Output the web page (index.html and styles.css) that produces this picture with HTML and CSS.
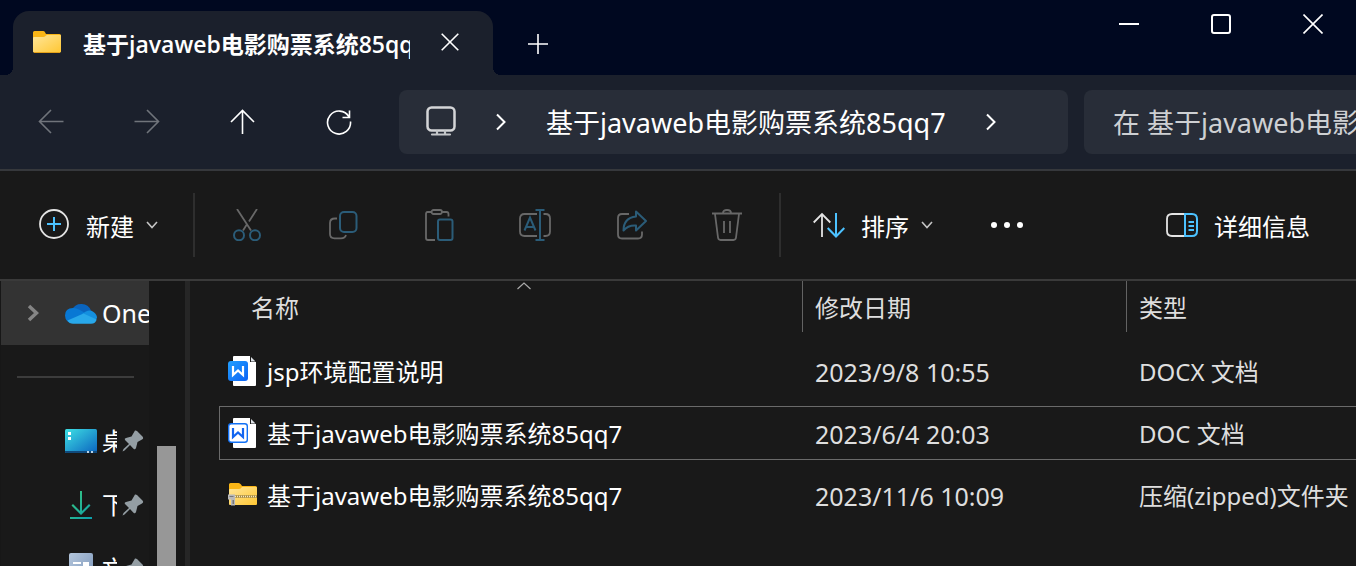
FILE: index.html
```html
<!DOCTYPE html>
<html lang="zh-CN">
<head>
<meta charset="utf-8">
<title>基于javaweb电影购票系统85qq7</title>
<link rel="stylesheet" href="styles.css">
</head>
<body>
<svg class="defs" aria-hidden="true">
  <defs>
    <linearGradient id="folder" x1="0" y1="0" x2="1" y2="1"><stop offset="0" stop-color="#ffe69a"/><stop offset="1" stop-color="#ffc733"/></linearGradient>
    <linearGradient id="desk" x1="0" y1="0" x2="1" y2="1"><stop offset="0" stop-color="#3ee0e4"/><stop offset="1" stop-color="#0b63bf"/></linearGradient>
    <linearGradient id="down" x1="0" y1="0" x2="1" y2="1"><stop offset="0" stop-color="#3cc97b"/><stop offset="1" stop-color="#0b9fae"/></linearGradient>
    <linearGradient id="doc" x1="0" y1="0" x2="1" y2="1"><stop offset="0" stop-color="#b4c6dc"/><stop offset="1" stop-color="#7893b8"/></linearGradient>
    <linearGradient id="word" x1="0" y1="0" x2="1" y2="1"><stop offset="0" stop-color="#22a0ff"/><stop offset="1" stop-color="#0b62f5"/></linearGradient>
    <symbol id="pin" viewBox="0 0 22 22"><path fill="#949ea4" d="M13 0.5Q14 .2 15 1L20.500 6.500Q22 8.500 20 9.500L15.500 12 14 18Q13 20 11.500 18.700L8 15 2.500 20.500.5 21.500 1.500 19 7 14 3 10Q2 8.500 4 8L9.500 6.500Z"/></symbol>
  </defs>
</svg>

<header class="titlebar">
  <div class="tab">
    <svg class="tab-icon" width="28" height="22" viewBox="0 0 28 22"><path fill="#fbb616" d="M0 1.500Q0 0 1.500 0H10q1.500 0 2 1.200L13 3H26.500Q28 3 28 4.500V20H0Z"/><path fill="url(#folder)" d="M0 7q0-1 1-1h9.500q1 0 1.800-.8T14 4H27q1 0 1 1V20.500Q28 21.500 27 21.500H1Q0 21.500 0 20.500Z"/><path stroke="#e5a21a" d="M1 21.500H27"/></svg>
    <span class="tab-title">基于javaweb电影购票系统85qq7</span>
    <button class="bare" aria-label="关闭标签页"><svg width="18" height="18" viewBox="0 0 18 18"><path class="line" d="M.7.7 17.300 17.300M17.300.7.7 17.300"/></svg></button>
  </div>
  <button class="bare new-tab" aria-label="新建标签页"><svg width="20" height="20" viewBox="0 0 20 20"><path class="line" d="M0 10H20M10 0V20"/></svg></button>
  <div class="window-controls">
    <button class="bare" aria-label="最小化"><svg width="20" height="20" viewBox="0 0 20 20"><path class="line strong" d="M0 10H20"/></svg></button>
    <button class="bare" aria-label="最大化"><svg width="20" height="20" viewBox="0 0 20 20"><rect class="line strong" x="1" y="1" width="18" height="18" rx="2"/></svg></button>
    <button class="bare" aria-label="关闭"><svg width="20" height="20" viewBox="0 0 20 20"><path class="line" d="M.5.5 19.500 19.500M19.500.5.5 19.500"/></svg></button>
  </div>
</header>

<nav class="navbar" aria-label="导航">
  <div class="nav-buttons">
    <button class="bare dim" aria-label="后退"><svg width="26" height="26" viewBox="0 0 26 26"><path class="line" d="M25.500 12.500H1.500M13 1 1.500 12.500 13 24"/></svg></button>
    <button class="bare dim" aria-label="前进"><svg width="26" height="26" viewBox="0 0 26 26"><path class="line" d="M.5 12.500H24.500M13 1 24.500 12.500 13 24"/></svg></button>
    <button class="bare" aria-label="向上"><svg width="26" height="26" viewBox="0 0 26 26"><path class="line" d="M12.500 25V1.500M1 13 12.500 1.500 24 13"/></svg></button>
    <button class="bare" aria-label="刷新"><svg width="26" height="26" viewBox="0 0 26 26"><path class="line" d="M24.500 12.500A11.500 11.500 0 1 1 23 7.800M23.500 1.500V8.500H16.500"/></svg></button>
  </div>
  <div class="address">
    <svg width="30" height="32" viewBox="0 0 30 32"><rect x="1.500" y="1.500" width="27" height="23" rx="4" fill="none" stroke="#d4d5d7" stroke-width="2.500"/><path d="M11 25v3M19 25v3M6 28.500H24" stroke="#c4c6c9" stroke-width="2.200" stroke-linecap="round"/></svg>
    <svg class="crumb-arrow" width="10" height="18" viewBox="0 0 10 18"><path class="line strong" d="M1 1.500 8.500 9 1 16.500"/></svg>
    <span class="crumb">基于javaweb电影购票系统85qq7</span>
    <svg class="crumb-arrow" width="10" height="18" viewBox="0 0 10 18"><path class="line strong" d="M1 1.500 8.500 9 1 16.500"/></svg>
  </div>
  <input class="search" type="text" aria-label="搜索" placeholder="在 基于javaweb电影">
</nav>

<div class="commands" role="toolbar" aria-label="命令">
  <button class="bare labeled"><svg width="32" height="32" viewBox="0 0 32 32"><circle cx="16" cy="15" r="14" class="line light"/><path class="line bright" d="M16 8V22M9 15H23"/></svg><span>新建</span><svg width="12" height="8" viewBox="0 0 12 8"><path class="line soft" d="M1 1 6 6.500 11 1"/></svg></button>
  <div class="command-group">
    <button class="bare" aria-label="剪切"><svg width="32" height="32" viewBox="0 0 32 32"><path class="line gray" d="M6 0 20 21.500M26 0 18 12.500M15.500 16 12 21.500"/><circle class="line blue" cx="8" cy="26.300" r="5"/><circle class="line blue" cx="24" cy="26.300" r="5"/></svg></button>
    <button class="bare" aria-label="复制"><svg width="32" height="32" viewBox="0 0 32 32"><rect class="line blue" x="13" y="3" width="16.500" height="20" rx="4"/><path class="line gray" d="M10 9.500H8Q3 9.500 3 14V25Q3 29.300 7.500 29.300H14Q18 29.300 19 26"/></svg></button>
    <button class="bare" aria-label="粘贴"><svg width="32" height="32" viewBox="0 0 32 32"><path class="line gray" d="M8.500 3H4.500Q3 3 3 5V29Q3 31 5 31H12M19 3H23.500Q25.500 3 25.500 5V7.500"/><rect class="line gray" x="8.500" y="1" width="10.500" height="4" rx="2"/><rect class="line blue" x="15" y="10.500" width="14.500" height="20.500" rx="2"/></svg></button>
    <button class="bare" aria-label="重命名"><svg width="32" height="32" viewBox="0 0 32 32"><path class="line gray" d="M18 5H5.500Q1 5 1 9.500V22.500Q1 27 5.500 27H18M24.500 5H26.500Q31 5 31 9.500V22.500Q31 27 26.500 27H24.500"/><path class="line blue" d="M21 1V31M16.500 1H25.500M16.500 31H25.500M5.500 21.500 11 8.500 16.500 21.500M7 18H15"/></svg></button>
    <button class="bare" aria-label="共享"><svg width="32" height="32" viewBox="0 0 32 32"><path class="line gray" d="M14 5H7Q3 5 3 9V25.500Q3 29.500 7 29.500H23Q27 29.500 27 25.500V22.500"/><path class="line blue" stroke-linejoin="round" d="M21 2.500 31 12 21 21.500V16.500Q13 16 8.500 21.500Q8.500 9 21 7.500Z"/></svg></button>
    <button class="bare" aria-label="删除"><svg width="32" height="32" viewBox="0 0 32 32"><path class="line gray" d="M1 4.500H31M12 4Q12 1 16 1T20 4M4 5 7 28.500Q7.300 31 9.500 31H22.500Q24.700 31 25 28.500L28 5M13 12V24M19 12V24"/></svg></button>
  </div>
  <button class="bare labeled"><svg width="32" height="32" viewBox="0 0 32 32"><path class="line light" d="M9 28V5M.7 13.500 9 5 17.300 13.500"/><path class="line bright" d="M23 4V27.500M14.700 19 23 27.500 31.300 19"/></svg><span>排序</span><svg width="12" height="8" viewBox="0 0 12 8"><path class="line soft" d="M1 1 6 6.500 11 1"/></svg></button>
  <button class="bare more" aria-label="查看更多"><svg width="32" height="6" viewBox="0 0 32 6"><g fill="#fff"><circle cx="3" cy="3" r="3"/><circle cx="16" cy="3" r="3"/><circle cx="29" cy="3" r="3"/></g></svg></button>
  <button class="bare labeled details"><svg width="32" height="32" viewBox="0 0 32 32"><path class="line light" d="M19 5H6Q1 5 1 10V22Q1 27 6 27H19"/><path class="line bright" d="M19 5H26Q31 5 31 10V22Q31 27 26 27H19ZM22.500 13H28M22.500 17H28M22.500 21H28"/></svg><span>详细信息</span></button>
</div>

<main class="content">
  <aside class="sidebar">
    <div class="tree">
      <a class="place current" href="#onedrive">
        <svg class="expander" width="12" height="18" viewBox="0 0 12 18"><path d="M2 2 9.500 9 2 16" fill="none" stroke="#858585" stroke-width="3.500"/></svg>
        <svg width="32" height="21" viewBox="0 0 32 21"><path fill="#0a64bd" d="M7 6.500A10.500 10.500 0 0 1 26 7.500L18 13Z"/><path fill="#0878d4" d="M8 20.500A8 8 0 0 1 0 12.500Q0 5 8 5Q11 4.800 14 6.500L22 11 4 20Z"/><path fill="#1490df" d="M17 11 21 8.500Q25 6.500 28.500 9Q32 11.500 32 15L29 19Z"/><path fill="#28a8ea" d="M2.500 17.500 18.500 10.500 31.700 16.500Q30.500 20.700 26 20.700H8Q4.500 20.700 2.500 17.500Z"/></svg>
        <span class="place-name">One</span>
      </a>
      <hr class="divider">
      <a class="place" href="#desktop">
        <svg width="32" height="24" viewBox="0 0 32 24"><rect width="32" height="24" rx="1.500" fill="url(#desk)"/><path fill="#104a7c" d="M0 22H32V23Q32 24 31 24H1Q0 24 0 23Z"/><path fill="#fff" d="M3 3H6V6H3ZM3 8H6V11H3Z"/><path fill="#b9d3e8" d="M22 22h2v2h-2ZM26 22h2v2h-2Z"/></svg>
        <span class="place-name">桌面</span><svg class="pin" width="22" height="22"><use href="#pin"/></svg>
      </a>
      <a class="place" href="#downloads">
        <svg width="32" height="28" viewBox="0 0 32 28"><path fill="url(#down)" d="M15 0H17V20L24 13 25.500 14.500 16 24 6.500 14.500 8 13 15 20ZM5 26H27V28H5Z"/></svg>
        <span class="place-name">下载</span><svg class="pin" width="22" height="22"><use href="#pin"/></svg>
      </a>
      <a class="place" href="#documents">
        <svg width="32" height="32" viewBox="0 0 32 32"><rect x="4" width="24" height="32" rx="2" fill="url(#doc)"/><path fill="#fff" d="M8 9H16V11H8ZM18 9H24V15H18ZM8 13H16V15H8Z"/></svg>
        <span class="place-name">文档</span><svg class="pin" width="22" height="22"><use href="#pin"/></svg>
      </a>
    </div>
    <div class="scrollbar"><div class="thumb"></div></div>
  </aside>

  <section class="files">
    <table>
      <colgroup><col><col class="col-date"><col class="col-type"></colgroup>
      <thead>
        <tr>
          <th scope="col"><div class="head first">名称<svg class="sort-mark" width="14" height="8" viewBox="0 0 14 8"><path d="M.5 7 7 1 13.500 7" fill="none" stroke="#aaa" stroke-width="1.200"/></svg></div></th>
          <th scope="col"><div class="head">修改日期</div></th>
          <th scope="col"><div class="head">类型</div></th>
        </tr>
      </thead>
      <tbody>
        <tr>
          <td><div class="cell name"><svg width="29" height="32" viewBox="0 0 29 32"><path fill="#fff" d="M6 1H22L28 7V30Q28 31 27 31H6Q5 31 5 30V2Q5 1 6 1Z"/><path fill="#191919" d="M22 1H28V7H22Z"/><path fill="#dfe3e8" d="M23 2 27.500 6.500H23Z"/><rect y="6" width="20" height="20" rx="3" fill="url(#word)"/><path fill="none" stroke="#fff" stroke-width="2.200" d="M5 11V20L10 15.500 15 20V11"/></svg><span>jsp环境配置说明</span></div></td>
          <td><div class="cell date">2023/9/8 10:55</div></td>
          <td><div class="cell">DOCX 文档</div></td>
        </tr>
        <tr class="focused">
          <td><div class="cell name"><svg width="29" height="32" viewBox="0 0 29 32"><path fill="#fff" d="M6 1H22L28 7V30Q28 31 27 31H6Q5 31 5 30V2Q5 1 6 1Z"/><path fill="#191919" d="M22 1H28V7H22Z"/><path fill="#dfe3e8" d="M23 2 27.500 6.500H23Z"/><rect x=".7" y="6.700" width="18.600" height="18.600" rx="2.500" fill="#fff" stroke="#1271f5" stroke-width="1.400"/><path fill="none" stroke="#1265f0" stroke-width="2.200" d="M5 11V20L10 15.500 15 20V11"/></svg><span>基于javaweb电影购票系统85qq7</span></div></td>
          <td><div class="cell date">2023/6/4 20:03</div></td>
          <td><div class="cell">DOC 文档</div></td>
        </tr>
        <tr>
          <td><div class="cell name"><svg width="29" height="24" viewBox="0 0 29 24"><path fill="#fbb616" d="M1 1.500Q1 0 2.500 0H10.500Q12 0 13 1.500L14 3H27.500Q29 3 29 4.500V20H1Z"/><path fill="url(#folder)" d="M1 7Q1 6 2 6H11Q13 6 14 4H28Q29 4 29 5V21Q29 22 28 22H2Q1 22 1 21Z"/><path stroke="#a58a44" stroke-width="2.600" d="M6 13.500H29"/><path stroke="#f3e7c0" stroke-width="1.500" stroke-dasharray="1 1" d="M7 13.500H29"/><path fill="#b9b9b9" d="M0 11.500H7V22.500H3V16.500H0Z"/><path fill="#777" d="M4.500 17H6V21H4.500ZM1.500 13H5.500V14H1.500Z"/></svg><span>基于javaweb电影购票系统85qq7</span></div></td>
          <td><div class="cell date">2023/11/6 10:09</div></td>
          <td><div class="cell">压缩(zipped)文件夹</div></td>
        </tr>
      </tbody>
    </table>
  </section>
</main>
</body>
</html>
```
FILE: styles.css
```css
* { box-sizing: border-box; }

body {
  margin: 0;
  height: 100vh;
  display: flex;
  flex-direction: column;
  overflow: hidden;
  background: #191919;
  color: #fff;
  font: 24px/32px "Noto Sans", "Noto Sans CJK SC", sans-serif;
}

svg { display: block; flex: none; }
.defs { position: absolute; width: 0; height: 0; }

.bare {
  display: flex;
  align-items: center;
  justify-content: center;
  padding: 0;
  border: 0;
  background: none;
  color: inherit;
  font: inherit;
}

.line { fill: none; stroke: #fff; stroke-width: 1.6; }
.strong { stroke-width: 2; }
.light { stroke: #e4e4e4; stroke-width: 1.8; }
.soft { stroke: #c4c4c4; }
.bright { stroke: #4cc2ff; stroke-width: 2; }
.gray { stroke: #686868; stroke-width: 1.8; }
.blue { stroke: #2b5c78; stroke-width: 2; }
.dim .line { stroke: #70747b; }

/* Title bar */
.titlebar {
  flex: none;
  display: flex;
  align-items: flex-end;
  height: 75px;
  padding-left: 13px;
  background: #000820;
}

.tab {
  position: relative;
  display: flex;
  align-items: center;
  width: 480px;
  height: 64px;
  padding: 0 34px 2px 20px;
  border-radius: 16px 16px 0 0;
  background: #1b202c;
}

.tab::before,
.tab::after {
  content: "";
  position: absolute;
  bottom: 0;
  width: 8px;
  height: 8px;
}
.tab::before { right: 100%; background: radial-gradient(circle at 0 0, transparent 8px, #1b202c 8px); }
.tab::after { left: 100%; background: radial-gradient(circle at 100% 0, transparent 8px, #1b202c 8px); }

.tab-icon { margin-right: 22px; }
.tab-title {
  flex: 1;
  margin-right: 31px;
  padding-top: 4px;
  overflow: hidden;
  white-space: nowrap;
  font-family: "Open Sans", "Noto Sans CJK SC", sans-serif;
  font-size: 23px;
  font-weight: 600;
}

.new-tab { height: 62px; margin-left: 35px; }

.window-controls {
  align-self: flex-start;
  display: flex;
  gap: 72px;
  height: 48px;
  margin-left: auto;
  padding-right: 33px;
}

/* Navigation bar */
.navbar {
  flex: none;
  display: flex;
  gap: 16px;
  padding: 15px 0;
  border-bottom: 2px solid #36383c;
  background: #1b202c;
  font-size: 27px;
}

.nav-buttons { flex: none; display: flex; padding-left: 3px; margin-right: -4px; }
.nav-buttons .bare { width: 96px; }

.address,
.search { height: 64px; background: #282d38; }

.address {
  flex: 1;
  display: flex;
  align-items: center;
  padding-left: 27px;
  border-radius: 8px;
  white-space: nowrap;
}
.crumb-arrow { margin: 0 40px; }
.crumb { padding-top: 2px; }

.search {
  flex: none;
  width: 272px;
  padding: 0 0 0 29px;
  border: 0;
  border-radius: 8px 0 0 8px;
  color: #fff;
  font: inherit;
}
.search::placeholder { color: #ced0d3; opacity: 1; }

/* Command bar */
.commands {
  flex: none;
  display: flex;
  align-items: center;
  height: 110px;
  padding: 0 46px 0 38px;
  border-bottom: 2px solid #3a3a3a;
}

.labeled { gap: 16px; white-space: nowrap; }
.labeled span { padding-top: 3px; }
.labeled svg + span + svg { margin-left: -4px; }

.command-group {
  display: flex;
  height: 64px;
  margin: 0 32px 0 35px;
  padding: 0 4px;
  border-left: 2px solid #2e2e2e;
  border-right: 2px solid #2e2e2e;
}
.command-group .bare { width: 96px; }

.more { margin-left: 58px; }
.details { margin-left: auto; }

/* Sidebar */
.content { flex: 1; display: flex; min-height: 0; }

.sidebar {
  flex: none;
  display: flex;
  width: 190px;
  padding-left: 1px;
  border-right: 5px solid #262626;
  background: #171717;
}

.tree { width: 148px; overflow: hidden; background: #191919; }

.place {
  display: flex;
  align-items: center;
  height: 64px;
  padding: 0 5px 0 64px;
  color: #fff;
  text-decoration: none;
}
.place.current { padding: 0 0 0 26px; background: #333; }
.expander { margin-right: 26px; }
.place-name { flex: 1; min-width: 0; margin-left: 5px; overflow: hidden; white-space: nowrap; }
.current .place-name { font-size: 25px; }
.pin { margin-left: 5px; }

.divider { height: 2px; margin: 31px 15px 31px 16px; border: 0; background: #3c3c3c; }

.scrollbar { width: 19px; margin-left: 8px; padding-top: 165px; }
.thumb { height: 100%; background: #979797; }

/* File list */
.files { flex: 1; min-width: 0; padding-left: 29px; }

table { width: 100%; table-layout: fixed; border-collapse: collapse; }
.col-date { width: 324px; }
.col-type { width: 230px; }

th, td { padding: 0; text-align: left; font-weight: 400; color: #dedede; white-space: nowrap; }
th { padding-bottom: 8px; }
td { padding: 4px 0; }

.head {
  position: relative;
  display: flex;
  align-items: center;
  height: 51px;
  padding: 2px 0 0 12px;
  border-left: 1px solid #636363;
}
.head.first { padding-left: 31px; border-color: transparent; }
.sort-mark { position: absolute; top: 1px; left: 51%; }

.cell {
  display: flex;
  align-items: center;
  height: 54px;
  padding: 2px 0 0 13px;
  border: 1px solid transparent;
  border-width: 1px 0;
}
.cell.name { gap: 10px; padding: 0 0 0 8px; border-left-width: 1px; color: #fff; }
.cell.name span { padding-top: 2px; }
.cell.date { font-size: 25px; }
.focused .cell { border-color: #6a6a6a; }
```
